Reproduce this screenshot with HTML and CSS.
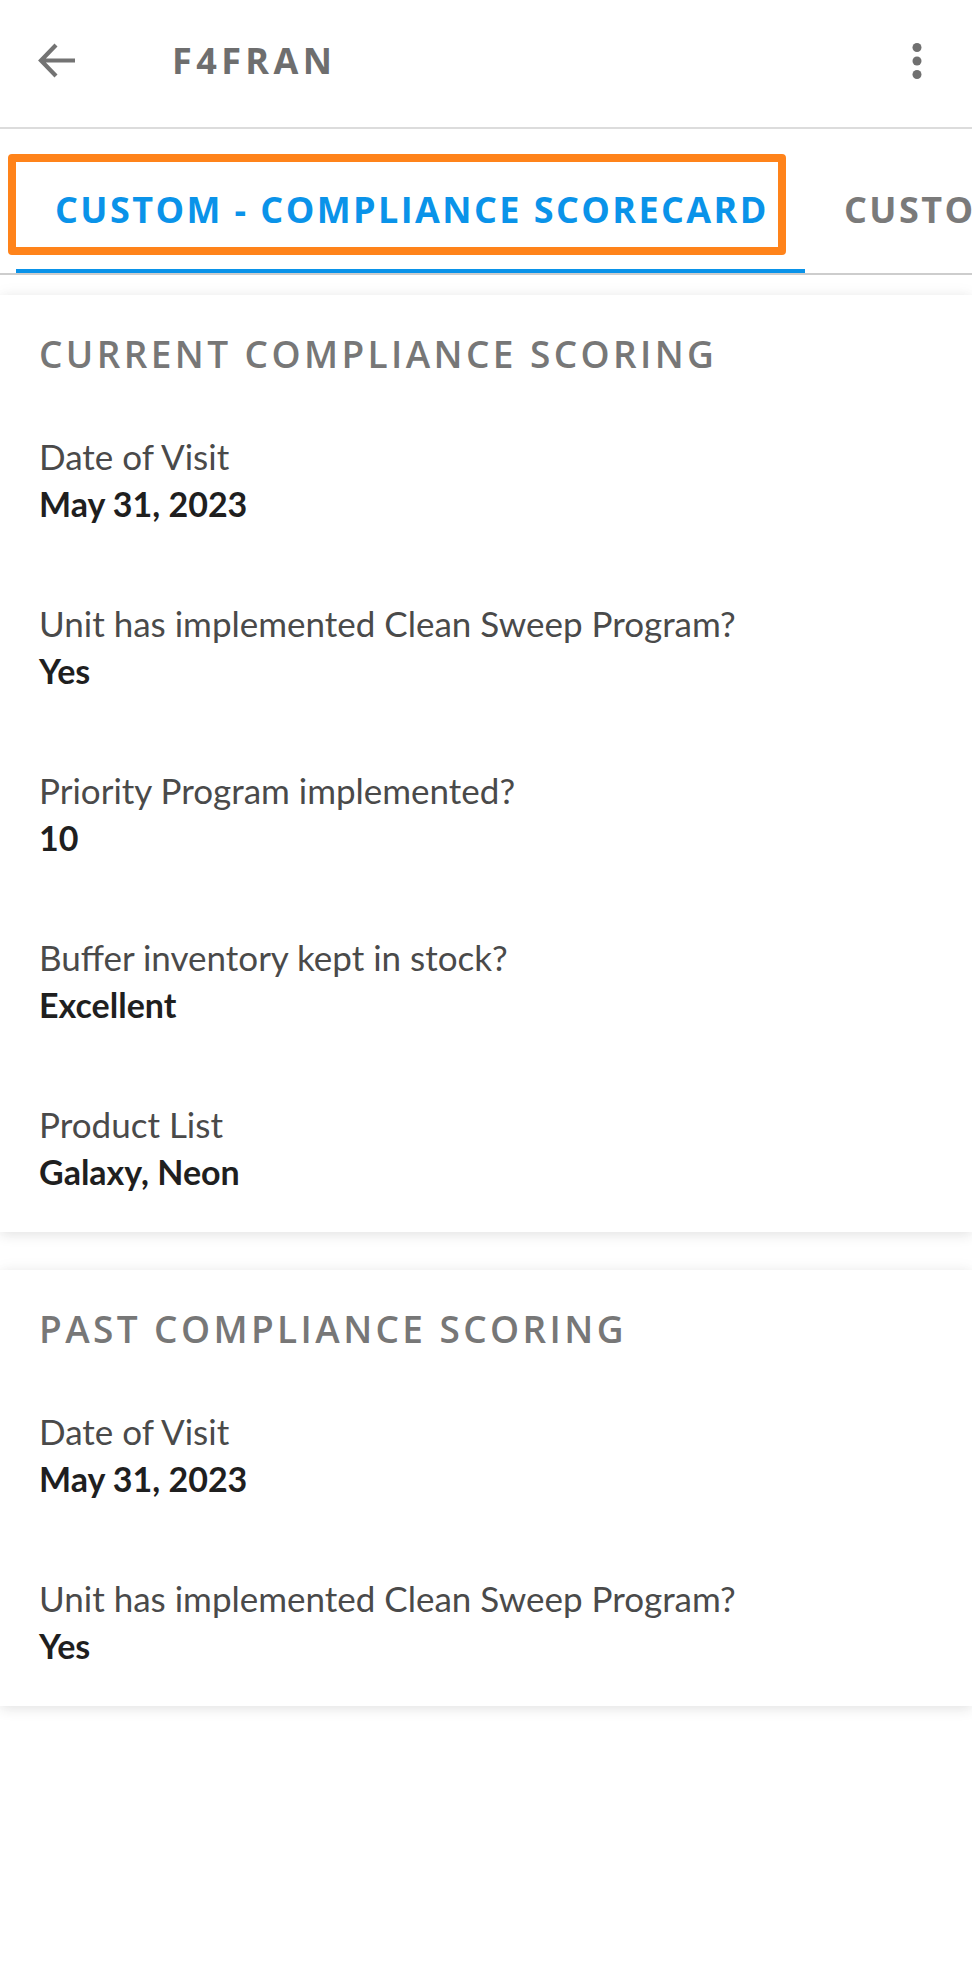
FILE: index.html
```html
<!DOCTYPE html>
<html lang="en">
<head>
<meta charset="utf-8">
<title>F4FRAN</title>
<link rel="stylesheet" href="styles.css">
</head>
<body>
<div class="app">
  <header class="topbar">
    <button class="icon-btn back" aria-label="Back">
      <svg width="40" height="40" viewBox="0 0 40 40"><path d="M38 19.5H5M19 4L4 19.5L19 35" fill="none" stroke="#737373" stroke-width="4.2" stroke-linecap="butt" stroke-linejoin="miter"/></svg>
    </button>
    <h1 class="title">F4FRAN</h1>
    <button class="icon-btn more" aria-label="More">
      <svg width="12" height="36" viewBox="0 0 12 36"><circle cx="6" cy="4.5" r="4.5" fill="#707070"/><circle cx="6" cy="18" r="4.5" fill="#707070"/><circle cx="6" cy="31.5" r="4.5" fill="#707070"/></svg>
    </button>
  </header>

  <nav class="tabs">
    <div class="tab active">
      <span class="tab-label">CUSTOM - COMPLIANCE SCORECARD</span>
      <span class="highlight"></span>
    </div>
    <div class="tab">
      <span class="tab-label">CUSTOM - PAST SCORECARD</span>
    </div>
  </nav>

  <main class="content">
    <section class="card">
      <h2 class="card-title">CURRENT COMPLIANCE SCORING</h2>
      <div class="field"><div class="label">Date of Visit</div><div class="value">May 31, 2023</div></div>
      <div class="field"><div class="label">Unit has implemented Clean Sweep Program?</div><div class="value">Yes</div></div>
      <div class="field"><div class="label">Priority Program implemented?</div><div class="value">10</div></div>
      <div class="field"><div class="label">Buffer inventory kept in stock?</div><div class="value">Excellent</div></div>
      <div class="field"><div class="label">Product List</div><div class="value">Galaxy, Neon</div></div>
    </section>
    <section class="card">
      <h2 class="card-title">PAST COMPLIANCE SCORING</h2>
      <div class="field"><div class="label">Date of Visit</div><div class="value">May 31, 2023</div></div>
      <div class="field"><div class="label">Unit has implemented Clean Sweep Program?</div><div class="value">Yes</div></div>
    </section>
  </main>
</div>
</body>
</html>
```
FILE: styles.css
```css
* { box-sizing: border-box; }
html, body { margin: 0; padding: 0; background: #ffffff; }
body { width: 972px; overflow-x: hidden; }

.app { width: 972px; }

.topbar {
  height: 129px;
  border-bottom: 2px solid #dcdcdc;
  display: flex;
  align-items: center;
  padding: 0 0 6px 37px;
}
.icon-btn {
  border: 0;
  background: none;
  padding: 0;
  display: flex;
  align-items: center;
  justify-content: center;
}
.back { width: 40px; height: 40px; }
.title {
  margin: 0 0 0 95px;
  font-family: "Open Sans", sans-serif;
  font-weight: 700;
  font-size: 36px;
  letter-spacing: 4.4px;
  color: #6e6e6e;
  flex: 1;
}
.more { width: 12px; height: 36px; margin-right: 49px; }

.tabs {
  display: flex;
  height: 146px;
  border-bottom: 2px solid #cdcdcd;
  padding-left: 16px;
  overflow: hidden;
  white-space: nowrap;
}
.tab {
  position: relative;
  flex: none;
  padding: 0 39px;
  display: flex;
  align-items: center;
  padding-top: 20px;
  border-bottom: 4px solid transparent;
}
.tab.active { border-bottom-color: #0a93e9; width: 789px; }
.tab-label {
  font-family: "Open Sans", sans-serif;
  font-weight: 700;
  font-size: 36px;
  letter-spacing: 2.4px;
  color: #7a7a7a;
}
.tab.active .tab-label { color: #0a93e9; }
.highlight {
  position: absolute;
  left: -8px;
  top: 25px;
  width: 778px;
  height: 101px;
  border: 8px solid #ff831a;
  border-radius: 4px;
  pointer-events: none;
}

.content {
  background: #ffffff;
  padding-top: 20px;
  padding-bottom: 40px;
}
.card {
  background: #ffffff;
  box-shadow: 0 -3px 14px rgba(0, 0, 0, 0.035), 0 4px 12px rgba(0, 0, 0, 0.09);
  padding: 37px 39px 37px;
  margin-bottom: 38px;
}
.card:last-child { margin-bottom: 0; }

.card-title {
  margin: 0 0 57px;
  font-family: "Open Sans", sans-serif;
  font-weight: 600;
  font-size: 37px;
  line-height: 44px;
  letter-spacing: 3.4px;
  color: #777777;
}
.field + .field { margin-top: 73px; }
.label {
  font-family: "Lato", sans-serif;
  font-size: 35px;
  line-height: 47px;
  color: #4a4a4a;
}
.value {
  font-family: "Lato", sans-serif;
  font-weight: 700;
  font-size: 34px;
  line-height: 47px;
  color: #1f1f1f;
}
```
